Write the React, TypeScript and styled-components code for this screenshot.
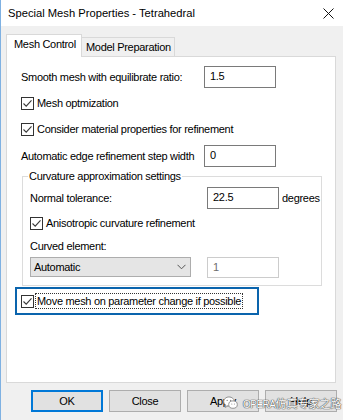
import React from "react";
import styled, { createGlobalStyle } from "styled-components";

const Global = createGlobalStyle`
  html, body { margin: 0; padding: 0; background: #f0f0f0; }
  body { width: 343px; height: 420px; overflow: hidden; }
`;

const FONT = `"Liberation Sans", Arial, sans-serif`;
const CJK_FONT = `"Liberation Sans", "Noto Sans CJK SC", sans-serif`;

const Window = styled.div`
  position: relative;
  width: 343px;
  height: 420px;
  box-sizing: border-box;
  border-left: 1px solid #7fb1e2;
  background: #f0f0f0;
  font-family: ${FONT};
  font-size: 11px;
  letter-spacing: -0.3px;
  color: #000;
  display: flex;
  flex-direction: column;
  overflow: hidden;
`;

const TitleBar = styled.div`
  height: 26px;
  flex: none;
  background: #fff;
  display: flex;
  align-items: center;
  justify-content: space-between;
  padding: 0 9px 0 7px;
  font-size: 11.2px;
  letter-spacing: 0;
`;

const Body = styled.div`
  display: flex;
  flex-direction: column;
  padding: 8px 0 0 5px;
`;

const TabStrip = styled.div`
  height: 22px;
  display: flex;
  align-items: flex-end;
`;

const Tab = styled.div<{ $active?: boolean }>`
  box-sizing: border-box;
  border: 1px solid #d9d9d9;
  border-bottom: none;
  line-height: 16px;
  white-space: nowrap;
  ${(p) =>
    p.$active
      ? `height: 23px; width: 76px; margin-bottom: -1px; background: #fff; padding: 1px 0 0 7px; position: relative; z-index: 2;`
      : `height: 19px; width: 93px; border-left: none; background: #f0f0f0; padding: 1px 0 0 4px;`}
`;

const Panel = styled.div`
  position: relative;
  box-sizing: border-box;
  width: 330px;
  height: 327px;
  background: #fff;
  border: 1px solid #d9d9d9;
  padding: 9px 0 0 14px;
  display: flex;
  flex-direction: column;
`;

const FieldRow = styled.div<{ $mt?: number; $label: number }>`
  display: grid;
  grid-template-columns: ${(p) => p.$label}px 72px auto;
  align-items: center;
  margin-top: ${(p) => p.$mt ?? 0}px;
  height: 22px;
`;

const Label = styled.span`
  white-space: nowrap;
  line-height: 16px;
`;

const TextBox = styled.div<{ $disabled?: boolean }>`
  box-sizing: border-box;
  height: ${(p) => (p.$disabled ? 21 : 22)}px;
  width: 72px;
  border: 1px solid ${(p) => (p.$disabled ? "#cccccc" : "#7a7a7a")};
  background: #fff;
  color: ${(p) => (p.$disabled ? "#6d6d6d" : "#000")};
  padding: 1px 0 0 5px;
  line-height: 16px;
`;

const Unit = styled.span`
  margin-left: 3px;
  line-height: 16px;
`;

const CheckRow = styled.div<{ $mt?: number }>`
  display: flex;
  align-items: center;
  height: 16px;
  margin-top: ${(p) => p.$mt ?? 0}px;
`;

const Box = styled.span`
  box-sizing: border-box;
  width: 13px;
  height: 13px;
  border: 1px solid #333;
  background: #fff;
  display: inline-flex;
  flex: none;
  margin-right: 2px;
`;

const CheckText = styled.span<{ $focus?: boolean }>`
  white-space: nowrap;
  line-height: 14px;
  padding: 0 1px;
  ${(p) => (p.$focus ? `outline: 1px dotted #333; outline-offset: 0;` : ``)}
`;

const Group = styled.div`
  box-sizing: border-box;
  margin: 9px 0 0 1px;
  width: 300px;
  border: 1px solid #dcdcdc;
  padding: 0 0 7px 7px;
  display: flex;
  flex-direction: column;
`;

const GroupTitle = styled.span`
  align-self: flex-start;
  margin: -9px 0 0 -2px;
  padding: 0 1px;
  background: #fff;
  line-height: 16px;
  white-space: nowrap;
`;

const PlainLabel = styled.div<{ $mt?: number }>`
  margin-top: ${(p) => p.$mt ?? 0}px;
  line-height: 16px;
`;

const ComboRow = styled.div`
  display: grid;
  grid-template-columns: 177px 72px;
  align-items: start;
  margin-top: 3px;
`;

const Combo = styled.div`
  box-sizing: border-box;
  width: 161px;
  height: 20px;
  background: #e5e5e5;
  border: 1px solid #adadad;
  display: flex;
  align-items: center;
  justify-content: space-between;
  padding: 0 4px 0 3px;
  line-height: 16px;
`;

const FocusFrame = styled.div`
  box-sizing: border-box;
  margin: 1px 0 0 -6px;
  width: 244px;
  height: 28px;
  border: 2px solid #0a64ad;
  display: flex;
  align-items: center;
  padding-left: 4px;
`;

const ButtonRow = styled.div`
  display: flex;
  gap: 6px;
  margin-top: 7px;
  padding-left: 25px;
`;

const Button = styled.div<{ $default?: boolean }>`
  box-sizing: border-box;
  width: 72px;
  height: 22px;
  background: #e1e1e1;
  border: ${(p) => (p.$default ? "2px solid #0078d7" : "1px solid #adadad")};
  display: flex;
  align-items: center;
  justify-content: center;
  line-height: 16px;
`;

const Watermark = styled.div`
  position: absolute;
  left: 222px;
  top: 395px;
  display: flex;
  align-items: center;
  gap: 5px;
  pointer-events: none;
`;

const WatermarkText = styled.span`
  font-family: ${CJK_FONT};
  font-size: 11px;
  letter-spacing: 0;
  color: #ffffff;
  text-shadow: 0 0 1px #444, 0 0 1px #444, 0 0 1px #666;
  white-space: nowrap;
`;

const WatermarkLatin = styled.span`
  font-size: 10px;
  letter-spacing: -0.5px;
`;

const CheckMark = () => (
  <svg width="11" height="11" viewBox="0 0 11 11">
    <path d="M1.5 5.5 L4.2 8.2 L9.5 2.3" fill="none" stroke="#3a3a3a" strokeWidth="1.1" />
  </svg>
);

const Check = ({ children, mt, focus }: { children: React.ReactNode; mt?: number; focus?: boolean }) => (
  <CheckRow $mt={mt}>
    <Box>
      <CheckMark />
    </Box>
    <CheckText $focus={focus}>{children}</CheckText>
  </CheckRow>
);

const CloseIcon = () => (
  <svg width="11" height="11" viewBox="0 0 11 11">
    <path d="M0.5 0.5 L10.5 10.5 M10.5 0.5 L0.5 10.5" stroke="#111" strokeWidth="1" />
  </svg>
);

const Chevron = () => (
  <svg width="9" height="6" viewBox="0 0 9 6">
    <path d="M0.5 0.8 L4.5 4.8 L8.5 0.8" fill="none" stroke="#555" strokeWidth="1" />
  </svg>
);

const WeChatIcon = () => (
  <svg width="15" height="14" viewBox="0 0 15 14">
    <ellipse cx="6" cy="5.5" rx="5.3" ry="4.6" fill="#fff" stroke="#8a8a8a" strokeWidth="0.9" />
    <path d="M2.8 9 L2.2 11.5 L5 9.8" fill="#fff" stroke="#8a8a8a" strokeWidth="0.9" />
    <ellipse cx="10" cy="8.6" rx="4.3" ry="3.7" fill="#fff" stroke="#8a8a8a" strokeWidth="0.9" />
    <circle cx="4.2" cy="4.4" r="0.7" fill="#8a8a8a" />
    <circle cx="7.6" cy="4.4" r="0.7" fill="#8a8a8a" />
    <circle cx="8.8" cy="8" r="0.55" fill="#8a8a8a" />
    <circle cx="11.4" cy="8" r="0.55" fill="#8a8a8a" />
  </svg>
);

export default function App() {
  return (
    <>
      <Global />
      <Window>
        <TitleBar>
          <span>Special Mesh Properties - Tetrahedral</span>
          <CloseIcon />
        </TitleBar>
        <Body>
          <TabStrip>
            <Tab $active>Mesh Control</Tab>
            <Tab>Model Preparation</Tab>
          </TabStrip>
          <Panel>
            <FieldRow $label={183}>
              <Label>Smooth mesh with equilibrate ratio:</Label>
              <TextBox>1.5</TextBox>
            </FieldRow>
            <Check mt={7}>Mesh optmization</Check>
            <Check mt={10}>Consider material properties for refinement</Check>
            <FieldRow $mt={8} $label={183}>
              <Label>Automatic edge refinement step width</Label>
              <TextBox>0</TextBox>
            </FieldRow>
            <Group>
              <GroupTitle>Curvature approximation settings</GroupTitle>
              <FieldRow $mt={3} $label={177}>
                <Label>Normal tolerance:</Label>
                <TextBox>22.5</TextBox>
                <Unit>degrees</Unit>
              </FieldRow>
              <Check mt={6}>Anisotropic curvature refinement</Check>
              <PlainLabel $mt={7}>Curved element:</PlainLabel>
              <ComboRow>
                <Combo>
                  <span>Automatic</span>
                  <Chevron />
                </Combo>
                <TextBox $disabled>1</TextBox>
              </ComboRow>
            </Group>
            <FocusFrame>
              <Box>
                <CheckMark />
              </Box>
              <CheckText $focus>Move mesh on parameter change if possible</CheckText>
            </FocusFrame>
          </Panel>
          <ButtonRow>
            <Button $default>OK</Button>
            <Button>Close</Button>
            <Button>Apply</Button>
            <Button>Help</Button>
          </ButtonRow>
        </Body>
        <Watermark>
          <WeChatIcon />
          <WatermarkText>
            <WatermarkLatin>OPERA</WatermarkLatin>仿真专家之路
          </WatermarkText>
        </Watermark>
      </Window>
    </>
  );
}
